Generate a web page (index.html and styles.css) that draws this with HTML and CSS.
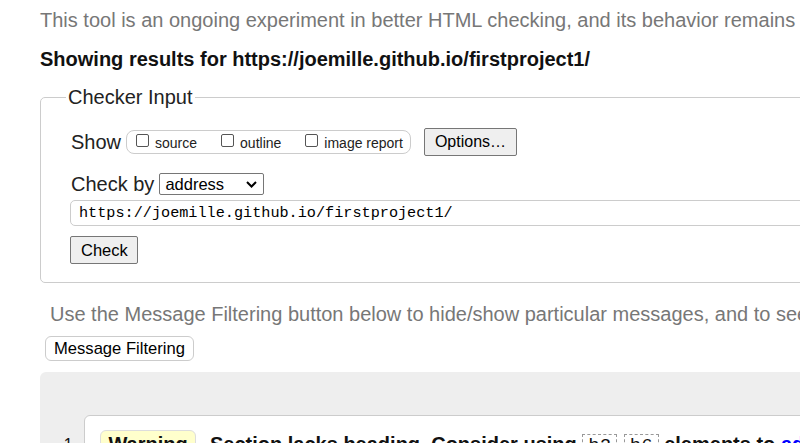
FILE: index.html
```html
<!DOCTYPE html>
<html lang="en">
<head>
<meta charset="utf-8">
<title>Nu Html Checker</title>
<link rel="stylesheet" href="styles.css">
</head>
<body>
<div class="page">
  <p class="intro">This tool is an ongoing experiment in better HTML checking, and its behavior remains subject to change</p>
  <p class="showing">Showing results for https://joemille.github.io/firstproject1/</p>
  <fieldset class="checker">
    <legend>Checker Input</legend>
    <div class="row show-row">
      <span class="lbl">Show</span>
      <span class="opts">
        <label class="opt"><span class="cb"></span>source</label>
        <label class="opt"><span class="cb"></span>outline</label>
        <label class="opt"><span class="cb"></span>image report</label>
      </span>
      <span class="btn options">Options…</span>
    </div>
    <div class="row checkby-row">
      <span class="lbl">Check by</span>
      <span class="select">address<svg class="chev" width="11" height="7" viewBox="0 0 11 7"><path d="M1 1 L5.5 5.5 L10 1" fill="none" stroke="#000" stroke-width="2"/></svg></span>
    </div>
    <div class="urlbox">https://joemille.github.io/firstproject1/</div>
    <span class="btn check">Check</span>
  </fieldset>
  <p class="filter-note">Use the Message Filtering button below to hide/show particular messages, and to see total counts of errors and warnings.</p>
  <span class="btn filter">Message Filtering</span>
  <div class="results">
    <ol class="msgs">
      <li class="msg">
        <span class="num">1.</span>
        <div class="card"><span class="badge">Warning</span><strong class="text">Section lacks heading. Consider using <code>h2</code>-<code>h6</code> elements to <a href="#">add identifying headings</a> to all sections.</strong></div>
      </li>
    </ol>
  </div>
</div>
</body>
</html>
```
FILE: styles.css
```css
html, body {
  margin: 0;
  padding: 0;
  overflow: hidden;
  background: #fff;
}
.page {
  width: 1300px;
  padding-left: 40px;
  font-family: "Liberation Sans", Arial, sans-serif;
  color: #111;
}
.intro {
  margin: 0;
  padding-top: 8px;
  font-size: 20px;
  line-height: 24px;
  color: #777;
  white-space: nowrap;
}
.showing {
  margin: 15px 0 0;
  font-size: 20px;
  line-height: 24px;
  font-weight: bold;
  color: #111;
  white-space: nowrap;
}
.checker {
  margin: 15px 0 0;
  padding: 18px 0 18px 30px;
  border: 1px solid #ccc;
  border-radius: 5px;
  width: 900px;
}
.checker legend {
  padding: 0 2px;
  margin-left: -5px;
  font-size: 20px;
  line-height: 23px;
  color: #222;
}
.row {
  display: flex;
  align-items: center;
}
.lbl {
  font-size: 20px;
  color: #222;
}
.show-row {
  height: 30px;
}
.opts {
  display: flex;
  align-items: center;
  margin-left: 5px;
  box-sizing: border-box;
  height: 24px;
  padding: 0 7px 0 9px;
  border: 1px solid #ccc;
  border-radius: 8px;
}
.opt {
  display: flex;
  align-items: center;
  font-size: 14px;
  color: #222;
  margin-right: 24px;
  padding-top: 2px;
}
.opt:last-child { margin-right: 0; }
.cb {
  box-sizing: border-box;
  width: 13px;
  height: 13px;
  border: 1px solid #555;
  border-radius: 2px;
  margin-right: 6px;
  position: relative;
  top: -3px;
}
.btn {
  display: inline-block;
  box-sizing: border-box;
  background: #efefef;
  border: 1px solid #767676;
  border-radius: 2px;
  color: #000;
  font-family: "Liberation Sans", Arial, sans-serif;
}
.options {
  margin-left: 13px;
  height: 28px;
  line-height: 26px;
  padding: 0 10px;
  font-size: 16px;
}
.checkby-row {
  margin-top: 15px;
  height: 24px;
}
.select {
  margin-left: 5px;
  box-sizing: border-box;
  width: 105px;
  height: 22px;
  border: 1px solid #767676;
  border-radius: 2px;
  display: flex;
  align-items: center;
  justify-content: space-between;
  padding: 0 6px 0 5px;
  font-size: 16.5px;
  color: #000;
}
.urlbox {
  box-sizing: border-box;
  margin: 4px 0 0 -1px;
  width: 880px;
  height: 26px;
  line-height: 24px;
  border: 1px solid #ccc;
  border-radius: 5px;
  padding-left: 8px;
  font-family: "Liberation Mono", "DejaVu Sans Mono", monospace;
  font-size: 15.2px;
  color: #000;
}
.check {
  display: block;
  width: max-content;
  margin: 10px 0 0 -1px;
  height: 28px;
  line-height: 26px;
  padding: 0 9px 0 10px;
  font-size: 16.5px;
}
.filter-note {
  margin: 19px 0 0 10px;
  font-size: 20px;
  line-height: 24px;
  color: #777;
  white-space: nowrap;
}
.filter {
  display: block;
  width: max-content;
  margin: 10px 0 0 5px;
  height: 25px;
  line-height: 23px;
  padding: 0 8px;
  font-size: 16.6px;
  background: #fff;
  border-color: #ccc;
  border-radius: 6px;
}
.results {
  margin-top: 11px;
  background: #eee;
  border-radius: 6px 0 0 0;
  padding: 43px 0 40px 0;
  width: 1260px;
}
.msgs {
  list-style: none;
  margin: 0;
  padding: 0;
}
.msg {
  display: flex;
  align-items: flex-start;
}
.num {
  width: 44px;
  text-align: right;
  padding-right: 7px;
  box-sizing: border-box;
  padding-top: 17px;
  font-size: 16px;
  line-height: 26px;
}
.card {
  flex: 1;
  background: #fff;
  border: 1px solid #ccc;
  border-radius: 6px;
  padding: 14px 15px 20px;
  font-size: 20px;
  line-height: 26px;
  white-space: nowrap;
}
.badge {
  display: inline-block;
  box-sizing: border-box;
  width: 96px;
  text-align: center;
  background: #ffc;
  border: 1px solid #ddd;
  border-radius: 6px;
  font-weight: bold;
  margin-right: 14px;
}
.text code {
  font-family: "Liberation Mono", monospace;
  font-weight: normal;
  font-size: 19px;
  border: 1px dashed #999;
  padding: 0 5px;
}
.text a {
  color: #00f;
  text-decoration: none;
}
```
